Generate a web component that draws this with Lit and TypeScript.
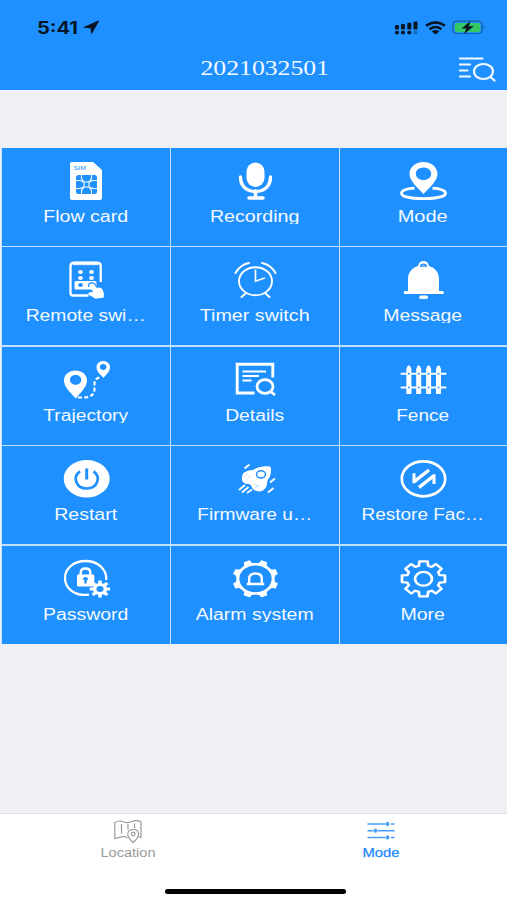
import { LitElement, html, svg, css } from "lit";
import { customElement } from "lit/decorators.js";

const teeth = (cx: number, cy: number, n: number, r1: number, r2: number, offset = 0, w = 0.5) => {
  const pts: string[] = [];
  const step = (Math.PI * 2) / n;
  for (let i = 0; i < n; i++) {
    const a = i * step + offset;
    const at = (r: number, t: number) =>
      `${(cx + r * Math.sin(a + t)).toFixed(2)} ${(cy - r * Math.cos(a + t)).toFixed(2)}`;
    pts.push(at(r1, -step * w * 0.62), at(r2, -step * w * 0.42), at(r2, step * w * 0.42), at(r1, step * w * 0.62));
  }
  return "M" + pts.join("L") + "Z";
};

const BLUE = "#1e90ff";

/* Tile glyphs share a 48x40 canvas. */
const icons: Record<string, unknown> = {
  sim: svg`
    <path fill="#fff" d="M10 1H31L40 9V37Q40 39 38 39H10Q8 39 8 37V3Q8 1 10 1Z"/>
    <text x="11.5" y="8.8" font-size="6" textLength="12.5" lengthAdjust="spacingAndGlyphs" fill=${BLUE}>SIM</text>
    <rect x="14" y="14" width="21" height="19" rx="2.5" fill=${BLUE}/>
    <g fill="none" stroke="#fff" stroke-width="1.1">
      <path d="M19.500 14V17.500L22 21H27L29.500 17.500V14M19.500 33V29.500L22 26H27L29.500 29.500V33M14 19.500H18L22 21V26L18 27.500H14M35 19.500H31L27 21V26L31 27.500H35"/>
    </g>`,
  mic: svg`
    <rect x="15.500" y="1.500" width="18" height="24.500" rx="9" fill="#fff"/>
    <path d="M9.500 16C9.500 25 15.500 30.500 24.500 30.500S39.500 25 39.500 16" fill="none" stroke="#fff" stroke-width="3.400" stroke-linecap="round"/>
    <path d="M24.500 30V36.500M18 36.900H32" fill="none" stroke="#fff" stroke-width="3.500" stroke-linecap="round"/>`,
  mode: svg`
    <path d="M15.500 27.200C6 28 2.500 30 2.500 32.200C2.500 35.500 11 37.600 24.500 37.600S46.500 35.500 46.500 32.200C46.500 30 43 28 33.500 27.200" fill="none" stroke="#fff" stroke-width="2.800"/>
    <path fill="#fff" fill-rule="evenodd" d="M24.500 1C32.500 1 38.500 6 38.500 13C38.500 20 30 27 24.500 33C19 27 10.500 20 10.500 13C10.500 6 16.500 1 24.500 1ZM24.500 6.500C20 6.500 16.800 9.300 16.800 12.800S20 19.100 24.500 19.100S32.200 16.300 32.200 12.800S29 6.500 24.500 6.500Z"/>`,
  remote: svg`
    <path d="M26.500 35.500H11Q8.500 35.500 8.500 33V6Q8.500 3 11 3H36Q38.700 3 38.700 6V22" fill="none" stroke="#fff" stroke-width="2.300"/>
    <path d="M11 3.300H36" stroke="#fff" stroke-width="3.800" opacity=".8"/>
    <g fill="#fff"><ellipse cx="18.500" cy="12" rx="2.400" ry="2"/><ellipse cx="29.500" cy="12" rx="2.400" ry="2"/><ellipse cx="18.500" cy="18" rx="2.400" ry="2"/><ellipse cx="29.500" cy="18" rx="2.400" ry="2"/>
    <rect x="12.500" y="21" width="22" height="8.500" rx="1.500"/></g>
    <ellipse cx="18.500" cy="24.900" rx="2.300" ry="2" fill=${BLUE}/>
    <path d="M26.800 27Q26 22.800 29.500 22.600Q33 22.800 34.500 27" fill="none" stroke=${BLUE} stroke-width="1.300"/>
    <path fill="#fff" d="M27.800 24.800Q29.500 22.800 31.300 24.500L34.500 28Q39 26.500 40.500 29.500Q42.500 32.500 41.800 37.500L33.500 38.800Q30.500 36.500 27 35Q25.300 33 28 32.300L31 32Z"/>`,
  timer: svg`
    <g fill="none" stroke="#fff" stroke-linecap="round">
      <ellipse cx="24.500" cy="21.200" rx="16.500" ry="14" stroke-width="1.900"/>
      <path d="M24.500 10V21.200L33.500 18" stroke-width="1.600"/>
      <path d="M4.500 13C6.500 8.500 12 4 18 3M44.500 13C42.500 8.500 37 4 31 3" stroke-width="2"/>
      <path d="M14.500 33.500L10.500 37M34.500 33.500L38.500 37" stroke-width="2"/>
    </g>`,
  bell: svg`
    <rect x="4.800" y="31" width="40" height="3" rx="1.300" fill="#fff"/>
    <path fill="#fff" d="M9 32V19C9 11.500 14 7.500 19 6Q20 1 24.500 1T30 6C35 7.500 40 11.500 40 19V32Z"/>
    <path fill="none" stroke=${BLUE} stroke-width="1.300" d="M21.500 6.200Q22 4.200 24.500 4.200T27.500 6.200Z"/>
    <rect x="20.300" y="35.600" width="8.700" height="3.300" rx="1.600" fill="#fff"/>`,
  route: svg`
    <path fill="#fff" fill-rule="evenodd" d="M13.500 10.500C20 10.500 25 14.800 25 20.500C25 27 19 32 13.800 38.500C8 32 2 27 2 20.500C2 14.800 7 10.500 13.500 10.500ZM13.500 15C10 15 8 17.200 8 19.800S10 24.800 13.500 24.800S19.300 22.500 19.300 19.800S17 15 13.500 15Z"/>
    <path fill="#fff" fill-rule="evenodd" d="M41 1C45 1 48 3.700 48 7.300C48 11.500 44.500 14.500 41.500 17.800C38 14.500 34.500 11.500 34.500 7.300C34.500 3.700 37.500 1 41 1ZM41.200 4C39.200 4 37.800 5.400 37.800 7S39.200 10 41.200 10S44.500 8.600 44.500 7S43.200 4 41.200 4Z"/>
    <path d="M16 37.500H22C29 37.500 32.500 34 32.500 29V23Q32.500 18.500 38 17.500" fill="none" stroke="#fff" stroke-width="2.100" stroke-dasharray="4 2.200"/>`,
  details: svg`
    <path d="M23.500 33H6.200V4.200H41.800V17.500" fill="none" stroke="#fff" stroke-width="2.900"/>
    <path d="M11.500 11.500H35M11.500 16H28M11.500 20.500H20.500" stroke="#fff" stroke-width="2.200"/>
    <ellipse cx="34" cy="26.500" rx="8" ry="6.800" fill="none" stroke="#fff" stroke-width="2.800"/>
    <path d="M39.500 31.500L44 35" stroke="#fff" stroke-width="2.800"/>`,
  fence: svg`
    <path d="M2.500 13.700H46.500M2.500 27.500H46.500" stroke="#fff" stroke-width="2.100" stroke-linecap="round"/>
    ${[9.900, 19.700, 29.600, 39.500].map(
      (x) => svg`<path fill="#fff" d="M${x - 2.500} 34V9Q${x - 1.500} 5.500 ${x} 5.200Q${x + 1.500} 5.500 ${x + 2.500} 9V34Z"/><path d="M${x - 0.900} 13.700H${x + 0.900}M${x - 0.900} 27.500H${x + 0.900}" stroke=${BLUE} stroke-width="1.500"/>`,
    )}`,
  power: svg`
    <ellipse cx="24.700" cy="19.800" rx="23" ry="18.800" fill="#fff"/>
    <path d="M18 12.300C10 18 14 29.500 24.700 29.500S39.500 18 31.500 12.300" fill="none" stroke=${BLUE} stroke-width="2.700"/>
    <path d="M24.700 9.500V20.500" stroke=${BLUE} stroke-width="3"/>`,
  rocket: svg`
    <path fill="#fff" d="M37 7.200Q40 6.800 40 9.500C40.500 14 39 18.500 36.500 21.500C36 25.500 36 28.500 32 31.500Q27 33.500 23 31Q21 29.500 20 26.500L18 25Q14 25.500 11.500 22.500Q10 19 12 14.500Q15.500 11 22 11C26 8 32 6.800 37 7.200Z"/>
    <ellipse cx="30" cy="15.300" rx="4.500" ry="3.600" fill="#fff" stroke=${BLUE} stroke-width="1.500"/>
    <path d="M13 18.500L17 14M15.500 20.500L20 16M23 25L28 28M24 29L28 25.500" stroke=${BLUE} stroke-width=".5" opacity=".45"/>
    <path d="M18.500 5.500L13.500 9.500M14 26L8 31M17.500 28L11 33.500M21 30.500L16 34M44 19.500L39 23.500M42.500 29L37 33.500" stroke="#fff" stroke-width="1.800"/>`,
  restore: svg`
    <ellipse cx="24.500" cy="19.800" rx="21.700" ry="17.500" fill="none" stroke="#fff" stroke-width="2.700"/>
    <g fill="none" stroke="#fff"><path d="M30 11L15.500 22.300M20 28.300L34.500 17" stroke-width="3.400"/><path d="M15 14.300V22.500L17 22M35 25V16.800L33 17.300" stroke-width="3"/></g>`,
  password: svg`
    <path d="M27 35.700C13 37.500 3 29.500 3 19C3 9.200 12 2 23.500 2S44.800 9.500 44.300 21" fill="none" stroke="#fff" stroke-width="2.300"/>
    <path d="M18.700 17V13.500Q18.700 9.500 23.500 9.500T28.300 13.500V17" fill="none" stroke="#fff" stroke-width="2.400"/>
    <rect x="15" y="15.500" width="17.300" height="12" rx="1.300" fill="#fff"/>
    <path d="M21.200 19Q23.500 16.900 25.800 19V20.900H24.700V24.500H22.300V20.900H21.200Z" fill=${BLUE}/>
    <g transform="translate(38 30) scale(1.200 1)"><path fill="#fff" d=${teeth(0, 0, 8, 6, 8.700)}/><circle r="3" fill=${BLUE}/></g>`,
  alarm: svg`
    <g transform="translate(24.500 19.800) scale(1.210 1)" stroke="#fff">
      <circle r="14.600" fill="none" stroke-width="2.500"/>
      ${[22.5, 67.5, 112.5, 157.5, 202.5, 247.5, 292.5, 337.5].map(
        (a) => svg`<path transform="rotate(${a})" fill="#fff" stroke-width="1" stroke-linejoin="round" d="M-4.500 -14.500Q-2.200 -15.500 -2.300 -18.500H2.300Q2.200 -15.500 4.500 -14.500Z"/>`,
      )}
    </g>
    <path d="M18.200 24.500V19.500Q18.200 14.500 24.500 14.500T30.800 19.500V24.500M15.800 25H33.200" fill="none" stroke="#fff" stroke-width="2.400"/>`,
  gear: svg`
    <g transform="translate(24.500 19.800) scale(1.230 1)" fill="none" stroke="#fff" stroke-width="2.200" stroke-linejoin="round">
      <path d=${teeth(0, 0, 8, 13.600, 17.800, 0, 0.57)}/><circle r="6.900"/>
    </g>`,
};

const tiles: [string, string, number][] = [
  ["sim", "Flow card", 85], ["mic", "Recording", 89.5], ["mode", "Mode", 50],
  ["remote", "Remote swi…", 120], ["timer", "Timer switch", 110], ["bell", "Message", 79],
  ["route", "Trajectory", 85], ["details", "Details", 59], ["fence", "Fence", 53],
  ["power", "Restart", 63], ["rocket", "Firmware u…", 115], ["restore", "Restore Fac…", 122.5],
  ["password", "Password", 85.5], ["alarm", "Alarm system", 118], ["gear", "More", 44.5],
];

@customElement("app-tile")
class AppTile extends LitElement {
  static properties = { icon: {}, label: {}, span: { type: Number } };
  declare icon: string;
  declare label: string;
  declare span: number;
  static styles = css`
    :host { display: flex; flex-direction: column; align-items: center; background: #1e90ff; padding: 13px 1px 0 0; box-sizing: border-box; min-width: 0; }
    .icon { width: 48px; height: 40px; display: block; flex: none; font-family: "Liberation Sans", Arial, sans-serif; }
    .label { display: block; flex: none; width: 160px; height: 18px; margin-top: 5px; overflow: hidden; fill: #f4f9ff; font: 15.8px "Liberation Sans", Arial, sans-serif; }
  `;
  render() {
    return html`
      <svg class="icon" viewBox="0 0 48 40">${icons[this.icon]}</svg>
      <svg class="label" viewBox="0 0 160 18">
        <text x="79.7" y="15.5" text-anchor="middle" textLength=${this.span} lengthAdjust="spacingAndGlyphs">${this.label}</text>
      </svg>`;
  }
}

@customElement("app-root")
class AppRoot extends LitElement {
  static styles = css`
    :host { display: flex; flex-direction: column; width: 507px; height: 900px; background: #efeff4; font-family: "Liberation Sans", Arial, sans-serif; overflow: hidden; }
    svg { display: block; flex: none; }
    header { background: #1e90ff; height: 90px; flex: none; box-sizing: border-box; }
    .status { display: flex; align-items: center; height: 46px; padding: 9px 21px 0 37px; box-sizing: border-box; }
    .time { font: bold 17px Inter, sans-serif; fill: #071525; }
    .arrow { margin-left: 4px; }
    .gap { margin-left: 6px; }
    .grow { flex: 1; }
    .bar { display: grid; grid-template-columns: 60px 1fr 60px; align-items: center; height: 44px; }
    .title { grid-column: 2; justify-self: center; margin-left: 22px; font: 22px "Liberation Serif", serif; fill: #f3f9ff; }
    .find { justify-self: end; margin: 3px 11px 0 0; }
    .grid { display: grid; grid-template-columns: 168px 168px 167px; grid-template-rows: 98px 98px 98px 98px 98px; column-gap: 1px; row-gap: 1.400px; background: #c3e1ff; margin: 58px 0 0 1px; padding-left: 1px; flex: none; }
    .grow-y { flex: 1; }
    .tabs { display: grid; grid-template-columns: 1fr 1fr; background: #fff; height: 87px; flex: none; border-top: 1px solid #e2e2e6; box-sizing: border-box; grid-template-rows: 74px 1fr; }
    .tab { display: flex; flex-direction: column; align-items: center; padding: 5px 0 0 2px; box-sizing: border-box; }
    .tab svg + svg { margin-top: 1px; }
    .tab-label { font: 12px "Liberation Sans", Arial, sans-serif; }
    .home { grid-column: 1 / 3; justify-self: center; width: 181px; height: 5px; border-radius: 3px; background: #000; margin: 1px 0 0 3px; }
  `;
  render() {
    return html`
      <header>
        <div class="status">
          <svg class="time" width="42" height="20" viewBox="0 0 42 20"><text x="0" y="16" textLength="41" lengthAdjust="spacingAndGlyphs">5:41</text></svg>
          <svg class="arrow" width="17" height="16" viewBox="0 0 17 16"><path fill="#071525" d="M16 1.200L9 13.600Q8.300 14.300 8 13.300L7.600 8.300L.8 7.700Q0 7.400 .8 6.900L15 .8Q16.300 .400 16 1.200Z"/></svg>
          <span class="grow"></span>
          <svg width="24" height="14" viewBox="0 0 24 14" fill="#071525">
            <rect x="0" y="4" width="4" height="4.500" rx="1"/><rect x="6" y="3" width="4" height="5.500" rx="1"/><rect x="12.300" y="1.800" width="4" height="6.700" rx="1"/><rect x="18.500" y=".6" width="4" height="8" rx="1"/>
            <rect x="0" y="9.800" width="4" height="3.500" rx="1.500"/><rect x="6" y="9.800" width="4" height="3.500" rx="1.500"/><rect x="12.300" y="9.800" width="4" height="3.500" rx="1.500"/><rect x="18.500" y="9.800" width="4" height="3.500" rx="1.500" opacity=".3"/>
          </svg>
          <svg class="gap" width="21" height="14" viewBox="0 0 21 14" fill="none" stroke="#071525" stroke-width="2.500">
            <path d="M1 4.800Q10.500 -2 20 4.800M4.500 8.200Q10.500 3.800 16.500 8.200"/><path fill="#071525" stroke="none" d="M6.700 10.200Q10.500 7.800 14.300 10.200L10.500 13.400Z"/>
          </svg>
          <svg class="gap" width="34" height="15" viewBox="0 0 34 15">
            <rect x="1" y="1.200" width="29" height="12.300" rx="3.500" fill="none" stroke="#1762aa" stroke-width="1.200"/>
            <rect x="2.700" y="2.900" width="25.600" height="9" rx="2" fill="#34c766"/>
            <path d="M31.300 5.300Q33.300 7.300 31.300 9.300Z" fill="#1762aa"/>
            <path d="M18.500 1L9.500 8.500H14.300L12 14L21.700 6.300H16.800Z" fill="#071525"/>
          </svg>
        </div>
        <div class="bar">
          <svg class="title" width="130" height="26" viewBox="0 0 130 26"><text x="0.500" y="20" textLength="128.500" lengthAdjust="spacingAndGlyphs">2021032501</text></svg>
          <svg class="find" width="39" height="27" viewBox="0 0 39 27" fill="none" stroke="#f3f9ff" stroke-width="2.200" stroke-linecap="round">
            <path d="M3 2.500H25.500M3 8.500H13M3 14.500H10.500M3 20.500H13"/><ellipse cx="26.500" cy="15.500" rx="9.500" ry="7.500"/><path d="M33.500 21L37.500 24.500"/>
          </svg>
        </div>
      </header>
      <main class="grid">
        ${tiles.map(([i, l, w]) => html`<app-tile .icon=${i} .label=${l} .span=${w}></app-tile>`)}
      </main>
      <span class="grow-y"></span>
      <nav class="tabs">
        <div class="tab">
          <svg width="30" height="25" viewBox="0 0 30 25" fill="none" stroke="#999" stroke-width="1.200">
            <path d="M14.500 19L11 17.300L1.800 19.500V3.500Q6 .8 10.500 3Q15 4.500 19.500 2.300Q24 .8 28 3V18.500L25.500 18M8.500 5V14.500M15 5V10.500M21.500 4.500V9"/>
            <path d="M20.200 23.500Q14.800 18.500 14.800 15.200C14.800 12.300 17 10.500 20.200 10.500S25.600 12.300 25.600 15.200Q25.600 18.500 20.200 23.500Z"/><circle cx="20.200" cy="15" r="1.800"/>
          </svg>
          <svg class="tab-label" width="60" height="16" viewBox="0 0 60 16" fill="#999"><text x="30" y="12" text-anchor="middle" textLength="55" lengthAdjust="spacingAndGlyphs">Location</text></svg>
        </div>
        <div class="tab">
          <svg width="30" height="25" viewBox="0 0 30 25" stroke="#469efa" stroke-width="1.500">
            <path d="M1.500 5H19M25 5H28.500M1.500 11.700H7M12 11.700H28.500M1.500 18.500H19M25 18.500H28.500"/>
            <g fill="#469efa" stroke-width=".8"><circle cx="21.500" cy="5" r="1.700"/><circle cx="9.500" cy="11.700" r="1.700"/><circle cx="21.500" cy="18.500" r="1.700"/></g>
          </svg>
          <svg class="tab-label" width="60" height="16" viewBox="0 0 60 16" fill="#2389fb" stroke="#2389fb" stroke-width=".25"><text x="30" y="12" text-anchor="middle" textLength="37" lengthAdjust="spacingAndGlyphs">Mode</text></svg>
        </div>
        <div class="home"></div>
      </nav>`;
  }
}
